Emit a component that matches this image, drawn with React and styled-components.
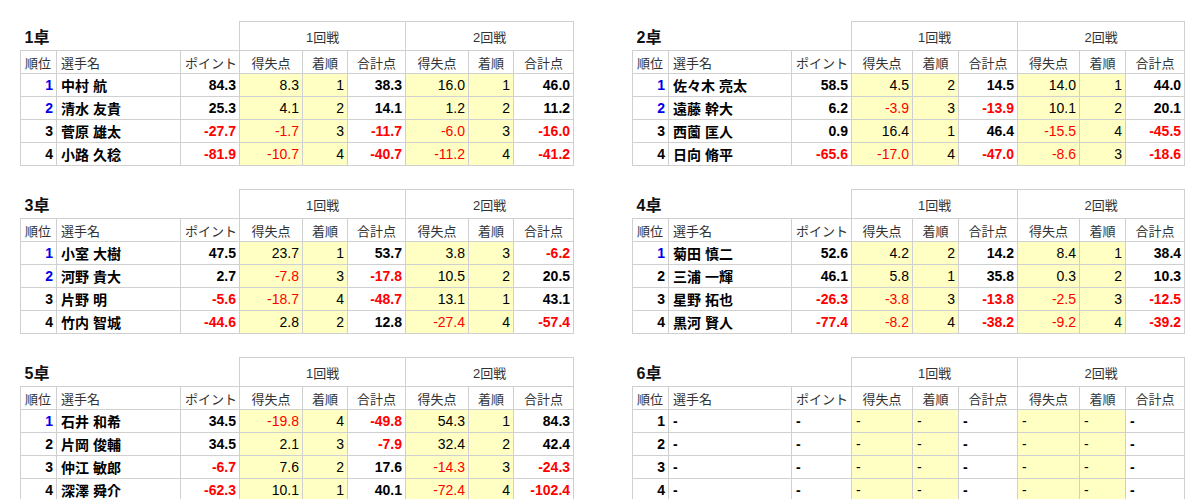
import React from "react";
import styled, { createGlobalStyle } from "styled-components";

const Global = createGlobalStyle`
  html, body { margin: 0; padding: 0; background: #fff; }
  body { font-family: "Liberation Sans", "Noto Sans CJK JP", sans-serif; color: #000; }
`;

const Page = styled.div`
  display: grid;
  grid-template-columns: 553px 552px;
  column-gap: 59px;
  row-gap: 23px;
  padding: 21px 0 0 20px;
  align-items: start;
`;

const Table = styled.table`
  border-collapse: collapse;
  table-layout: fixed;
  width: ${(p) => p.$w}px;
  font-family: "Liberation Sans", "Noto Sans CJK JP", sans-serif;
`;

const Col = styled.col`
  width: ${(p) => p.$w}px;
`;

const TitleCell = styled.th`
  border: none;
  border-bottom: 1px solid #d0d0d0;
  text-align: left;
  padding: 0 4px;
  font-size: 16px;
  font-weight: bold;
  height: 28px;
  color: #111;
`;

const GroupCell = styled.th`
  border: 1px solid #d0d0d0;
  font-size: 13px;
  font-weight: normal;
  color: #333;
  text-align: center;
  height: 28px;
  padding: 0;
`;

const HeadCell = styled.th`
  border: 1px solid #d0d0d0;
  font-size: 13px;
  font-weight: normal;
  color: #333;
  text-align: ${(p) => (p.$left ? "left" : "center")};
  height: 22px;
  padding: 0 4px;
  white-space: nowrap;
  overflow: hidden;
`;

const Cell = styled.td`
  border: 1px solid #d0d0d0;
  height: 22px;
  padding: 0 3px 0 4px;
  font-size: 14px;
  white-space: nowrap;
  overflow: hidden;
  text-align: ${(p) => (p.$left ? "left" : "right")};
  font-weight: ${(p) => (p.$bold ? "bold" : "normal")};
  color: ${(p) => p.$color || "#000"};
  background: ${(p) => (p.$yellow ? "#ffffc4" : "#fff")};
`;

const colorFor = (v) => (typeof v === "string" && v.startsWith("-") && v.length > 1 ? "#ff0000" : "#000");

const TABLES = [
  {
    title: "1卓",
    blue: 2,
    rows: [
      ["中村 航", "84.3", "8.3", "1", "38.3", "16.0", "1", "46.0"],
      ["清水 友貴", "25.3", "4.1", "2", "14.1", "1.2", "2", "11.2"],
      ["菅原 雄太", "-27.7", "-1.7", "3", "-11.7", "-6.0", "3", "-16.0"],
      ["小路 久稔", "-81.9", "-10.7", "4", "-40.7", "-11.2", "4", "-41.2"],
    ],
  },
  {
    title: "2卓",
    blue: 2,
    rows: [
      ["佐々木 亮太", "58.5", "4.5", "2", "14.5", "14.0", "1", "44.0"],
      ["遠藤 幹大", "6.2", "-3.9", "3", "-13.9", "10.1", "2", "20.1"],
      ["西薗 匡人", "0.9", "16.4", "1", "46.4", "-15.5", "4", "-45.5"],
      ["日向 脩平", "-65.6", "-17.0", "4", "-47.0", "-8.6", "3", "-18.6"],
    ],
  },
  {
    title: "3卓",
    blue: 2,
    rows: [
      ["小室 大樹", "47.5", "23.7", "1", "53.7", "3.8", "3", "-6.2"],
      ["河野 貴大", "2.7", "-7.8", "3", "-17.8", "10.5", "2", "20.5"],
      ["片野 明", "-5.6", "-18.7", "4", "-48.7", "13.1", "1", "43.1"],
      ["竹内 智城", "-44.6", "2.8", "2", "12.8", "-27.4", "4", "-57.4"],
    ],
  },
  {
    title: "4卓",
    blue: 1,
    rows: [
      ["菊田 慎二", "52.6", "4.2", "2", "14.2", "8.4", "1", "38.4"],
      ["三浦 一輝", "46.1", "5.8", "1", "35.8", "0.3", "2", "10.3"],
      ["星野 拓也", "-26.3", "-3.8", "3", "-13.8", "-2.5", "3", "-12.5"],
      ["黒河 賢人", "-77.4", "-8.2", "4", "-38.2", "-9.2", "4", "-39.2"],
    ],
  },
  {
    title: "5卓",
    blue: 1,
    rows: [
      ["石井 和希", "34.5", "-19.8", "4", "-49.8", "54.3", "1", "84.3"],
      ["片岡 俊輔", "34.5", "2.1", "3", "-7.9", "32.4", "2", "42.4"],
      ["仲江 敏郎", "-6.7", "7.6", "2", "17.6", "-14.3", "3", "-24.3"],
      ["深澤 舜介", "-62.3", "10.1", "1", "40.1", "-72.4", "4", "-102.4"],
    ],
  },
  {
    title: "6卓",
    blue: 0,
    empty: true,
    rows: [0, 1, 2, 3].map(() => ["-", "-", "-", "-", "-", "-", "-", "-"]),
  },
];

const LEFT_COLS = [36, 124, 59, 63, 45, 58, 63, 45, 60];
const RIGHT_COLS = [36, 123, 60, 61, 46, 59, 62, 46, 59];

function ScoreTable({ data, cols }) {
  const total = cols.reduce((a, b) => a + b, 0);
  const e = !!data.empty;
  return (
    <Table $w={total}>
      <colgroup>
        {cols.map((w, i) => (
          <Col key={i} $w={w} />
        ))}
      </colgroup>
      <thead>
        <tr>
          <TitleCell colSpan={3}>{data.title}</TitleCell>
          <GroupCell colSpan={3}>1回戦</GroupCell>
          <GroupCell colSpan={3}>2回戦</GroupCell>
        </tr>
        <tr>
          <HeadCell $left>順位</HeadCell>
          <HeadCell $left>選手名</HeadCell>
          <HeadCell>ポイント</HeadCell>
          <HeadCell>得失点</HeadCell>
          <HeadCell>着順</HeadCell>
          <HeadCell>合計点</HeadCell>
          <HeadCell>得失点</HeadCell>
          <HeadCell>着順</HeadCell>
          <HeadCell>合計点</HeadCell>
        </tr>
      </thead>
      <tbody>
        {data.rows.map((r, i) => (
          <tr key={i}>
            <Cell $bold $color={i < data.blue ? "#0000ee" : "#000"}>
              {i + 1}
            </Cell>
            <Cell $left $bold>{r[0]}</Cell>
            <Cell $left={e} $bold $color={colorFor(r[1])}>{r[1]}</Cell>
            <Cell $left={e} $yellow $color={colorFor(r[2])}>{r[2]}</Cell>
            <Cell $left={e} $yellow>{r[3]}</Cell>
            <Cell $left={e} $bold $color={colorFor(r[4])}>{r[4]}</Cell>
            <Cell $left={e} $yellow $color={colorFor(r[5])}>{r[5]}</Cell>
            <Cell $left={e} $yellow>{r[6]}</Cell>
            <Cell $left={e} $bold $color={colorFor(r[7])}>{r[7]}</Cell>
          </tr>
        ))}
      </tbody>
    </Table>
  );
}

export default function App() {
  return (
    <>
      <Global />
      <Page>
        {TABLES.map((t, i) => (
          <ScoreTable key={t.title} data={t} cols={i % 2 === 0 ? LEFT_COLS : RIGHT_COLS} />
        ))}
      </Page>
    </>
  );
}
